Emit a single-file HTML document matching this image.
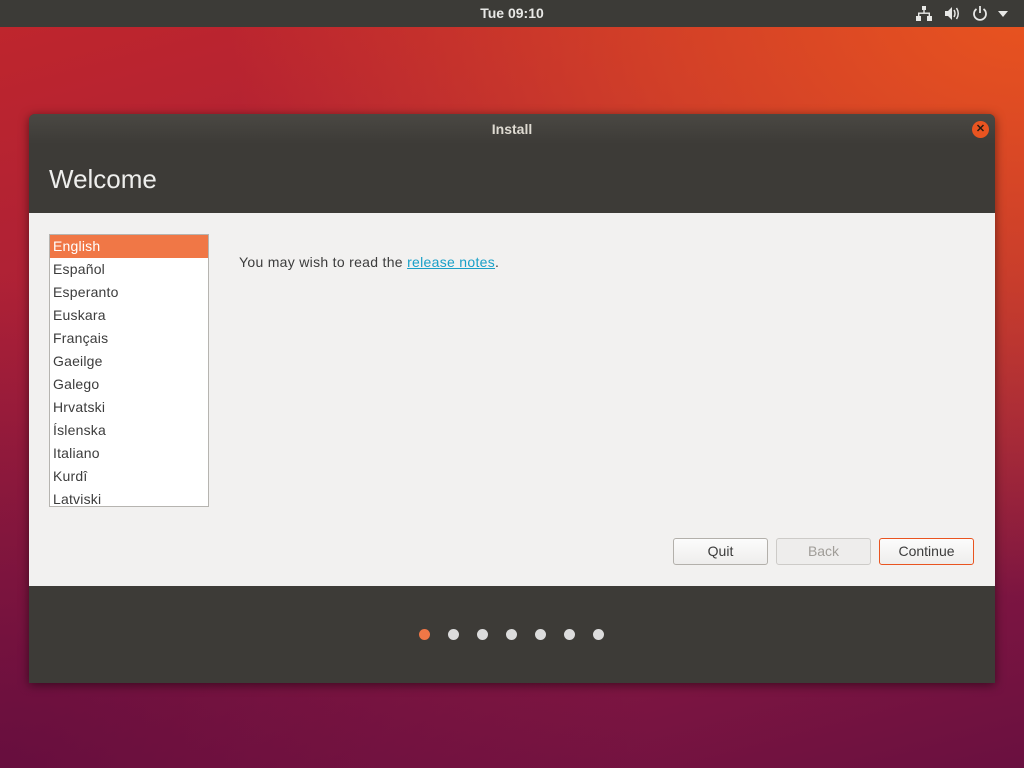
<!DOCTYPE html>
<html><head><meta charset="utf-8"><style>
*{margin:0;padding:0;box-sizing:border-box}
body{width:1024px;height:768px;overflow:hidden;position:relative;font-family:"Liberation Sans",sans-serif;
background:linear-gradient(165deg,#c0262c 0%,#aa2038 35%,#8e1a42 65%,#6a1040 100%);}
.bg2{position:absolute;inset:0;background:radial-gradient(ellipse at 100% 0%,#e9541f 0%,rgba(233,84,31,.6) 25%,rgba(200,40,40,0) 55%);}
.bg3{position:absolute;inset:0;background:radial-gradient(ellipse at 0% 100%,rgba(90,10,60,.7) 0%,rgba(90,10,60,0) 45%);}
.top{position:absolute;left:0;top:0;width:1024px;height:27px;background:#3c3b37;color:#e8e8e6;font-size:14px;font-weight:bold;text-align:center;line-height:26px}
.win{position:absolute;left:29px;top:114px;width:966px;height:569px;background:#3d3b37;border-radius:6px 6px 0 0;box-shadow:0 2px 10px rgba(0,0,0,.5);overflow:hidden}
.title{height:30px;color:#dfdbd2;font-size:14px;font-weight:bold;text-align:center;line-height:30px;background:linear-gradient(#4a4843,#3d3b37)}
.close{position:absolute;right:6px;top:7px;width:17px;height:17px;border-radius:50%;background:#e95420;color:#2a1a10;font-size:11px;font-weight:bold;line-height:17px;text-align:center}
h1{position:absolute;left:20px;top:50px;font-weight:normal;font-size:26px;color:#eeeeec}
.content{position:absolute;left:0;top:99px;width:966px;height:373px;background:#f2f1f0}
.list{position:absolute;left:20px;top:21px;width:160px;height:273px;background:#fff;border:1px solid #b6b4b0;overflow:hidden}
.list div{height:23px;line-height:23px;padding-left:3px;font-size:14px;color:#3c3c3c;letter-spacing:.2px}
.list .sel{background:#f07746;color:#fff}
.msg{position:absolute;left:210px;top:41px;font-size:14px;color:#3c3c3c;letter-spacing:.3px}
.msg a{color:#19a0c8;text-decoration:underline}
.btn{position:absolute;top:325px;height:27px;width:95px;border:1px solid #b3b0ab;border-radius:3px;background:linear-gradient(#fcfcfc,#eeedec);font-size:14px;color:#3c3c3c;text-align:center;line-height:25px}
.dot{position:absolute;top:0;width:11px;height:11px;border-radius:50%;background:#dcdcdc}
.dots{position:absolute;top:515px;left:390px}
</style></head><body>
<div class="bg2"></div><div class="bg3"></div>
<div class="top">Tue 09:10
<svg style="position:absolute;left:916px;top:6px" width="16" height="15" viewBox="0 0 16 15" fill="#e8e8e6"><rect x="6" y="0" width="4" height="4"/><rect x="7.3" y="4" width="1.4" height="3"/><rect x="2" y="6.5" width="12" height="1.4"/><rect x="2" y="7" width="1.4" height="4"/><rect x="12.6" y="7" width="1.4" height="4"/><rect x="0" y="10" width="5" height="5"/><rect x="11" y="10" width="5" height="5"/></svg>
<svg style="position:absolute;left:944px;top:6px" width="17" height="15" viewBox="0 0 17 15"><path d="M1 5h3l4-4v13l-4-4H1z" fill="#e8e8e6"/><path d="M10 4q2 3.5 0 7M12.5 2q3.5 5.5 0 11" stroke="#e8e8e6" stroke-width="1.5" fill="none"/></svg>
<svg style="position:absolute;left:972px;top:5px" width="16" height="16" viewBox="0 0 16 16" fill="none" stroke="#e8e8e6" stroke-width="1.8"><path d="M4.5 4a6 6 0 1 0 7 0"/><path d="M8 1v7"/></svg>
<svg style="position:absolute;left:998px;top:11px" width="10" height="6" viewBox="0 0 10 6"><path d="M0 0h10L5 6z" fill="#e8e8e6"/></svg>
</div>
<div class="win">
<div class="title">Install</div>
<div class="close">✕</div>
<h1>Welcome</h1>
<div class="content">
<div class="list">
<div class="sel">English</div><div>Español</div><div>Esperanto</div><div>Euskara</div><div>Français</div><div>Gaeilge</div><div>Galego</div><div>Hrvatski</div><div>Íslenska</div><div>Italiano</div><div>Kurdî</div><div>Latviski</div>
</div>
<div class="msg">You may wish to read the <a>release notes</a>.</div>
<div class="btn" style="left:644px">Quit</div>
<div class="btn" style="left:747px;color:#a09d98;background:#eeedec;border-color:#cdcbc8">Back</div>
<div class="btn" style="left:850px;border-color:#e95420">Continue</div>
</div>
<div class="dots">
<div class="dot" style="left:0;background:#f07746"></div>
<div class="dot" style="left:29px"></div>
<div class="dot" style="left:58px"></div>
<div class="dot" style="left:87px"></div>
<div class="dot" style="left:116px"></div>
<div class="dot" style="left:145px"></div>
<div class="dot" style="left:174px"></div>
</div>
</div>
</body></html>
